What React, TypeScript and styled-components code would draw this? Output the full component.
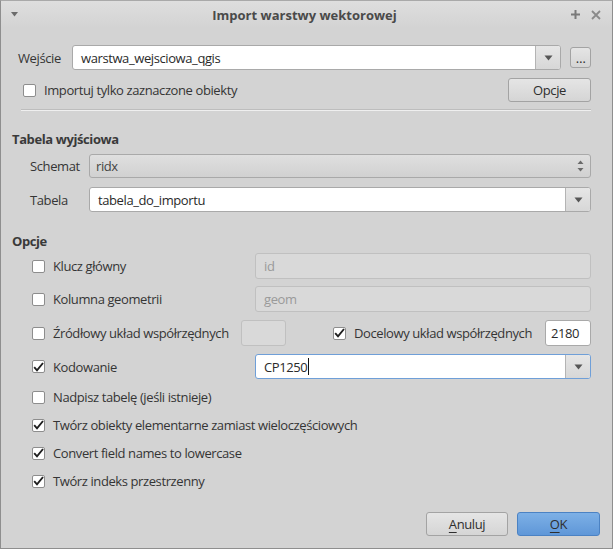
import React from 'react';
import styled, { createGlobalStyle } from 'styled-components';

const Global = createGlobalStyle`
  html, body { margin: 0; padding: 0; background: #d4d4d4; }
  body {
    font-family: "Open Sans", "Noto Sans", sans-serif;
    font-size: 13px;
    letter-spacing: -0.4px;
    color: #353535;
  }
  * { box-sizing: border-box; }
`;

const Window = styled.div`
  width: 613px;
  height: 549px;
  background: #d3d3d3;
  border: 1px solid #8e8e8e;
  border-top-color: #a9a9a9;
  display: flex;
  flex-direction: column;
`;

const TitleBar = styled.div`
  height: 27px;
  flex: none;
  display: flex;
  align-items: center;
  padding: 0 11px 0 10px;
  background: linear-gradient(#dedede, #d3d3d3);
`;

const TitleText = styled.div`
  flex: 1;
  text-align: center;
  font-weight: 700;
  letter-spacing: 0;
  color: #4a4a4a;
  padding-left: 20px;
`;

const TitleIcons = styled.div`
  display: flex;
  gap: 10px;
  align-items: center;
`;

const Body = styled.div`
  flex: 1;
  display: flex;
  flex-direction: column;
  padding: 17px 21px 0 0;
`;

const Row = styled.div<{ $h?: number; $pl?: number; $mt?: number }>`
  display: flex;
  align-items: center;
  height: ${p => p.$h ?? 26}px;
  padding-left: ${p => p.$pl ?? 0}px;
  margin-top: ${p => p.$mt ?? 0}px;
`;

const Label = styled.span<{ $w?: number }>`
  white-space: nowrap;
  ${p => (p.$w ? `width: ${p.$w}px; flex: none;` : '')}
`;

const Heading = styled.div<{ $mt: number }>`
  font-weight: 700;
  color: #3a3a3a;
  padding-left: 11px;
  margin-top: ${p => p.$mt}px;
  height: 18px;
  line-height: 18px;
`;

const Combo = styled.div<{ $focus?: boolean; $w?: number }>`
  height: 25px;
  display: flex;
  ${p => (p.$w ? `width: ${p.$w}px; flex: none;` : 'flex: 1;')}
  border: 1px solid ${p => (p.$focus ? '#6f9fd8' : '#a9a9a9')};
  border-radius: 3px;
  background: #fff;
  overflow: hidden;
`;

const ComboText = styled.div`
  flex: 1;
  display: flex;
  align-items: center;
  padding-left: 8px;
  color: #2a2a2a;
`;

const Caret = styled.span`
  display: inline-block;
  width: 1px;
  height: 17px;
  background: #111;
  margin-left: 1px;
`;

const DropButton = styled.div`
  width: 25px;
  flex: none;
  display: flex;
  align-items: center;
  justify-content: center;
  border-left: 1px solid #b4b4b4;
  background: linear-gradient(#e6e6e6, #d7d7d7);
`;

const SelectBox = styled.div`
  flex: 1;
  height: 24px;
  display: flex;
  align-items: center;
  padding: 0 6px 0 6px;
  border: 1px solid #a9a9a9;
  border-radius: 3px;
  background: linear-gradient(#dfdfdf, #d1d1d1);
  color: #444;
`;

const Spacer = styled.div`
  flex: 1;
`;

const Button = styled.div<{ $w: number; $primary?: boolean; $h?: number }>`
  width: ${p => p.$w}px;
  height: ${p => p.$h ?? 24}px;
  flex: none;
  display: flex;
  align-items: center;
  justify-content: center;
  border: 1px solid ${p => (p.$primary ? '#4b82c3' : '#a3a3a3')};
  border-radius: 3px;
  background: ${p =>
    p.$primary ? 'linear-gradient(#7db0e6, #5f97d8)' : 'linear-gradient(#e5e5e5, #d5d5d5)'};
  color: #2e2e2e;
`;

const Box = styled.span`
  width: 13px;
  height: 13px;
  flex: none;
  border: 1px solid #8d8d8d;
  border-radius: 2px;
  background: #fff;
  display: inline-flex;
  align-items: center;
  justify-content: center;
  margin-right: 8px;
`;

const Separator = styled.div`
  margin: 7px 0 0 20px;
  height: 2px;
  border-top: 1px solid #bdbdbd;
  border-bottom: 1px solid #efefef;
`;

const Field = styled.div<{ $disabled?: boolean; $w?: number }>`
  height: 26px;
  ${p => (p.$w ? `width: ${p.$w}px; flex: none;` : 'flex: 1;')}
  display: flex;
  align-items: center;
  padding-left: 8px;
  border: 1px solid ${p => (p.$disabled ? '#c0c0c0' : '#a9a9a9')};
  border-radius: 3px;
  background: ${p => (p.$disabled ? '#d9d9d9' : '#fff')};
  color: ${p => (p.$disabled ? '#9a9a9a' : '#2a2a2a')};
`;

const Footer = styled.div`
  display: flex;
  justify-content: flex-end;
  gap: 9px;
  margin-top: auto;
  margin-right: -9px;
  margin-bottom: 12px;
`;

const Mnemonic = styled.span`
  text-decoration: underline;
  text-underline-offset: 3px;
`;

const Arrow = () => (
  <svg width="9" height="6" viewBox="0 0 9 6">
    <path d="M0.5 0.5 H8.5 L4.5 5.5 Z" fill="#565656" />
  </svg>
);

const SpinArrows = () => (
  <svg width="7" height="12" viewBox="0 0 7 12">
    <path d="M0.5 4 L3.5 0.5 L6.5 4 Z" fill="#6a6a6a" />
    <path d="M0.5 8 L3.5 11.5 L6.5 8 Z" fill="#6a6a6a" />
  </svg>
);

const Check: React.FC<{ checked?: boolean }> = ({ checked }) => (
  <Box>
    {checked && (
      <svg width="11" height="10" viewBox="0 0 11 10">
        <path d="M1.2 5.2 L4 8.3 L10 1" stroke="#1e1e1e" strokeWidth="1.9" fill="none" strokeLinejoin="miter" />
      </svg>
    )}
  </Box>
);

const CheckLabel: React.FC<{ checked?: boolean; text: string; w?: number }> = ({ checked, text, w }) => (
  <>
    <Check checked={checked} />
    <Label $w={w}>{text}</Label>
  </>
);

export default function App() {
  return (
    <>
      <Global />
      <Window>
        <TitleBar>
          <svg width="8" height="5" viewBox="0 0 8 5">
            <path d="M0 0 H7 L3.5 4.5 Z" fill="#6b6b6b" />
          </svg>
          <TitleText>Import warstwy wektorowej</TitleText>
          <TitleIcons>
            <svg width="11" height="11" viewBox="0 0 11 11">
              <path d="M5.5 1 V10 M1 5.5 H10" stroke="#7a7a7a" strokeWidth="2" />
            </svg>
            <svg width="10" height="10" viewBox="0 0 10 10">
              <path d="M1 1 L9 9 M9 1 L1 9" stroke="#8a8a8a" strokeWidth="1.8" />
            </svg>
          </TitleIcons>
        </TitleBar>
        <Body>
          <Row $h={25} $pl={17}>
            <Label $w={54}>Wejście</Label>
            <Combo>
              <ComboText>warstwa_wejsciowa_qgis</ComboText>
              <DropButton>
                <Arrow />
              </DropButton>
            </Combo>
            <Button $w={21} $h={21} style={{ marginLeft: 9 }}>
              …
            </Button>
          </Row>
          <Row $h={24} $pl={22} $mt={8}>
            <CheckLabel text="Importuj tylko zaznaczone obiekty" />
            <Spacer />
            <Button $w={83}>Opcje</Button>
          </Row>
          <Separator />
          <Heading $mt={19}>Tabela wyjściowa</Heading>
          <Row $h={24} $pl={29} $mt={6}>
            <Label $w={59}>Schemat</Label>
            <SelectBox>
              <Spacer>ridx</Spacer>
              <SpinArrows />
            </SelectBox>
          </Row>
          <Row $h={25} $pl={29} $mt={9}>
            <Label $w={59}>Tabela</Label>
            <Combo>
              <ComboText>tabela_do_importu</ComboText>
              <DropButton>
                <Arrow />
              </DropButton>
            </Combo>
          </Row>
          <Heading $mt={20}>Opcje</Heading>
          <Row $pl={31} $mt={3}>
            <CheckLabel text="Klucz główny" w={202} />
            <Field $disabled>id</Field>
          </Row>
          <Row $pl={31} $mt={7}>
            <CheckLabel text="Kolumna geometrii" w={202} />
            <Field $disabled>geom</Field>
          </Row>
          <Row $pl={31} $mt={8}>
            <CheckLabel text="Źródłowy układ współrzędnych" w={188} />
            <Field $disabled $w={45} />
            <Spacer />
            <Check checked />
            <Label>Docelowy układ współrzędnych</Label>
            <Field $w={46} style={{ marginLeft: 13, paddingLeft: 5 }}>2180</Field>
          </Row>
          <Row $h={25} $pl={31} $mt={8}>
            <CheckLabel checked text="Kodowanie" w={202} />
            <Combo $focus>
              <ComboText>
                CP1250
                <Caret />
              </ComboText>
              <DropButton>
                <Arrow />
              </DropButton>
            </Combo>
          </Row>
          <Row $h={28} $pl={31} $mt={4}>
            <CheckLabel text="Nadpisz tabelę (jeśli istnieje)" />
          </Row>
          <Row $h={28} $pl={31}>
            <CheckLabel checked text="Twórz obiekty elementarne zamiast wieloczęściowych" />
          </Row>
          <Row $h={28} $pl={31}>
            <CheckLabel checked text="Convert field names to lowercase" />
          </Row>
          <Row $h={28} $pl={31}>
            <CheckLabel checked text="Twórz indeks przestrzenny" />
          </Row>
          <Footer>
            <Button $w={82}>
              <span>
                <Mnemonic>A</Mnemonic>nuluj
              </span>
            </Button>
            <Button $w={83} $primary>
              <span>
                <Mnemonic>O</Mnemonic>K
              </span>
            </Button>
          </Footer>
        </Body>
      </Window>
    </>
  );
}
